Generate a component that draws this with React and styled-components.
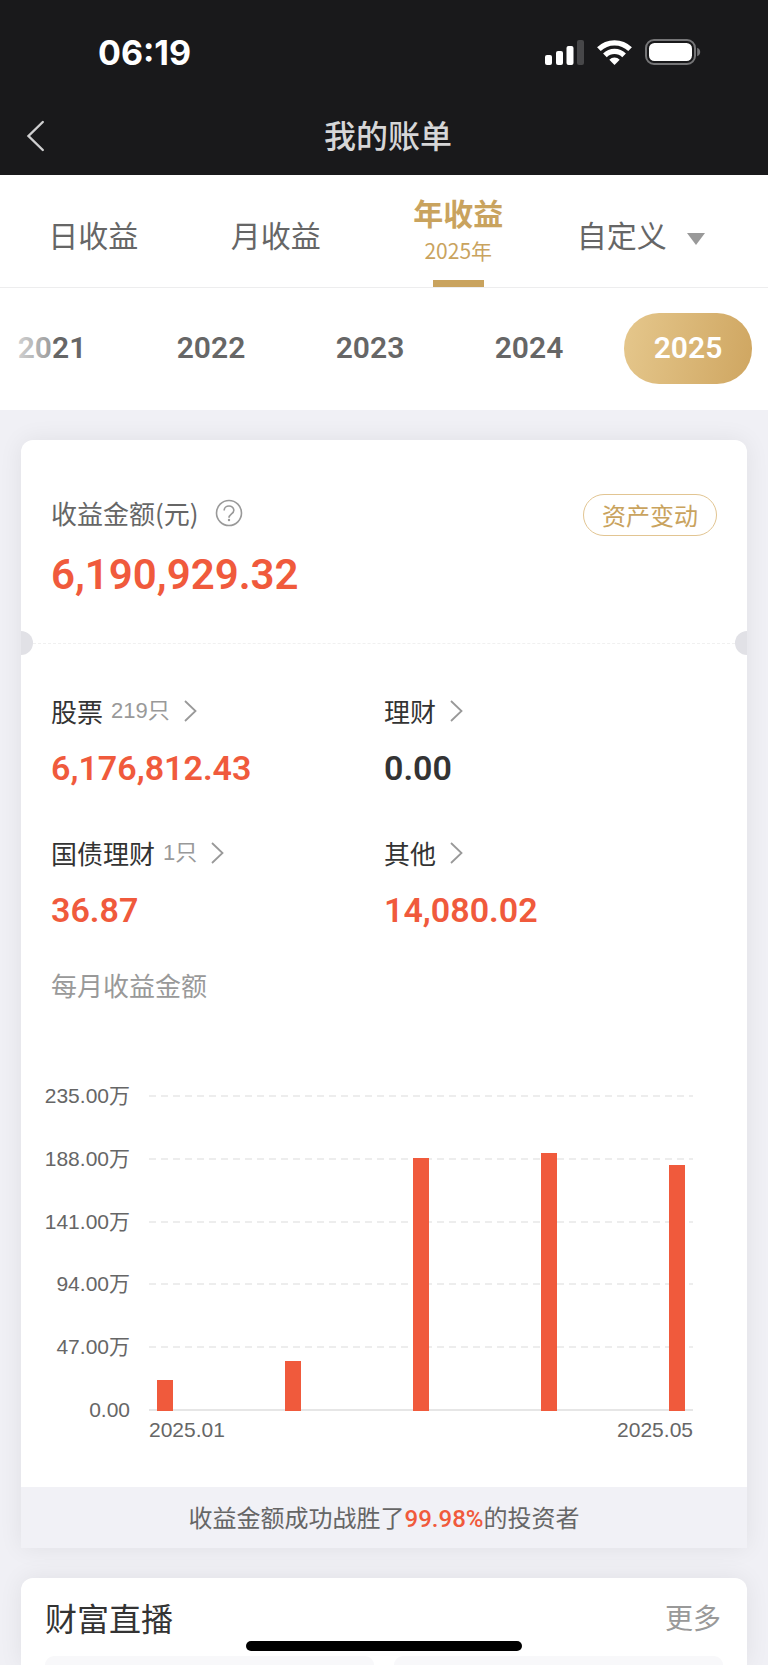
import React from "react";
import styled, { createGlobalStyle } from "styled-components";

const color = {
  ink: "#333",
  text: "#666",
  mute: "#999",
  gold: "#c9a35e",
  red: "#f05a3c",
  page: "#f0f0f5",
  bar: "#19191b",
};

const numerals = `Roboto, "Noto Sans CJK SC", sans-serif`;

const GlobalStyle = createGlobalStyle`
  *, *::before, *::after { box-sizing: border-box; }
  body {
    margin: 0;
    background: ${color.page};
    color: ${color.text};
    font-family: "Noto Sans CJK SC", sans-serif;
  }
  button {
    margin: 0;
    padding: 0;
    border: 0;
    background: none;
    color: inherit;
    font: inherit;
    cursor: pointer;
  }
  a { color: inherit; text-decoration: none; }
  h1, h2, p { margin: 0; font-weight: 400; }
  svg { display: block; flex: none; }
`;

const Header = styled.header`
  background: ${color.bar};
`;

const StatusBar = styled.div`
  display: flex;
  align-items: center;
  justify-content: space-between;
  height: 96px;
  padding: 8px 67px 0 98px;
`;

const Clock = styled.time`
  padding-top: 2px;
  font: 700 34px/40px Inter, sans-serif;
  color: #fff;
`;

const StatusIcons = styled.div`
  display: flex;
  align-items: center;
  gap: 13px;
`;

const NavBar = styled.div`
  display: grid;
  grid-template-columns: 1fr auto 1fr;
  align-items: center;
  height: 79px;
  padding: 0 16px 0 24px;
  color: #d6d6d7;
`;

const Title = styled.h1`
  padding-bottom: 4px;
  font-size: 32px;
  line-height: 44px;
  font-weight: 500;
`;

const Tabs = styled.nav`
  display: grid;
  grid-template-columns: repeat(4, 1fr);
  height: 113px;
  padding: 0 36px 0 2px;
  background: #fff;
  border-bottom: 1px solid #ededee;
`;

const Tab = styled.button`
  display: flex;
  align-items: center;
  justify-content: center;
  gap: 20px;
  padding-top: 5px;
  font-size: 30px;
  line-height: 40px;
`;

const ActiveTab = styled.button`
  display: flex;
  flex-direction: column;
  align-items: center;
  justify-content: space-between;
  padding-top: 17px;
  color: ${color.gold};
  font-size: 30px;
  font-weight: 700;
  line-height: 40px;

  small {
    display: block;
    font-size: 21px;
    font-weight: 400;
    line-height: 36px;
  }

  &::after {
    content: "";
    width: 51px;
    height: 7px;
    background: ${color.gold};
  }
`;

const Caret = styled.span`
  border: 9px solid transparent;
  border-top: 12px solid ${color.mute};
  border-bottom: 0;
  margin-top: 10px;
`;

const Years = styled.div`
  position: relative;
  display: flex;
  align-items: center;
  justify-content: flex-end;
  gap: 31px;
  height: 122px;
  padding: 0 16px 2px 0;
  overflow: hidden;
  background: #fff;

  &::before {
    content: "";
    position: absolute;
    inset: 0 auto 0 0;
    width: 53px;
    background: linear-gradient(90deg, rgba(255, 255, 255, 0.88), rgba(255, 255, 255, 0.34));
    pointer-events: none;
  }
`;

const Year = styled.button`
  flex: none;
  width: 128px;
  height: 71px;
  border-radius: 35px;
  font-family: ${numerals};
  font-size: 30px;
  font-weight: 600;
  line-height: 40px;
  color: ${(p) => (p.$active ? "#fff" : color.text)};
  background: ${(p) => (p.$active ? "linear-gradient(100deg, #e5c78c, #cfa661)" : "none")};
`;

const Main = styled.main`
  display: flex;
  flex-direction: column;
  gap: 30px;
  padding: 30px 21px 0;
`;

const Card = styled.section`
  background: #fff;
  border-radius: 12px 12px 0 0;
  box-shadow: 0 0 24px rgba(0, 0, 0, 0.07);
`;

const Summary = styled.div`
  padding: 54px 30px 38px;
`;

const SummaryHead = styled.div`
  display: flex;
  align-items: center;
  justify-content: space-between;
  height: 42px;
`;

const Label = styled.div`
  display: flex;
  align-items: center;
  gap: 16px;
  padding-bottom: 4px;
  font-size: 26px;
  line-height: 38px;
`;

const Outline = styled.button`
  width: 134px;
  height: 42px;
  border: 1px solid #e2c592;
  border-radius: 21px;
  color: ${color.gold};
  font-size: 24px;
  line-height: 36px;
`;

const Total = styled.p`
  margin-top: 9px;
  color: ${color.red};
  font-family: ${numerals};
  font-size: 42px;
  font-weight: 600;
  line-height: 60px;
`;

const Perforation = styled.div`
  display: flex;
  align-items: center;
  justify-content: space-between;
  height: 24px;
  margin: -12px 0;

  &::before,
  &::after {
    content: "";
    width: 12px;
    height: 24px;
    background: #e1e1e6;
  }
  &::before { border-radius: 0 12px 12px 0; }
  &::after { border-radius: 12px 0 0 12px; }
`;

const Dashes = styled.span`
  flex: 1;
  border-top: 1px dashed #f0f0f0;
`;

const Holdings = styled.div`
  display: grid;
  grid-template-columns: 1fr 1fr;
  row-gap: 44px;
  padding: 49px 30px 0;
`;

const HoldingName = styled.a`
  display: flex;
  align-items: center;
  color: ${color.ink};
  font-size: 26px;
  line-height: 38px;

  small {
    margin-left: 8px;
    color: ${color.mute};
    font-family: "Liberation Sans", "Noto Sans CJK SC", sans-serif;
    font-size: 22px;
  }
  svg { margin-left: 14px; }
`;

const HoldingValue = styled.p`
  margin-top: 16px;
  color: ${(p) => (p.$flat ? color.ink : color.red)};
  font-family: ${numerals};
  font-size: 34px;
  font-weight: 600;
  line-height: 44px;
`;

const ChartTitle = styled.h2`
  padding: 34px 30px 0;
  color: ${color.mute};
  font-size: 26px;
  line-height: 38px;
`;

const Chart = styled.div`
  display: grid;
  grid-template-columns: 89px 1fr;
  column-gap: 19px;
  padding: 80px 54px 45px 20px;
  font-family: "Liberation Sans", "Noto Sans CJK SC", sans-serif;
  font-size: 21px;
  line-height: 24px;
`;

const Scale = styled.div`
  display: flex;
  flex-direction: column;
  justify-content: space-between;
  height: 338px;
  text-align: right;

  span { height: 24px; }
`;

const Plot = styled.div`
  display: grid;
  height: 316px;
  margin-top: 11px;

  > * { grid-area: 1 / 1; }
`;

const GridLines = styled.div`
  display: flex;
  flex-direction: column;
  justify-content: space-between;
`;

const GridLine = styled.span`
  height: 2px;
  background: ${(p) =>
    p.$base ? "#e6e6e6" : "repeating-linear-gradient(90deg, #ededed 0 7px, transparent 7px 12px)"};
`;

const Bars = styled.div`
  display: flex;
  align-items: flex-end;
  justify-content: space-between;
  padding: 0 8px;
`;

const Bar = styled.span`
  width: 16px;
  background: ${color.red};
`;

const Months = styled.div`
  display: flex;
  justify-content: space-between;
  margin-top: 7px;
`;

const Rank = styled.p`
  padding: 12px 0 13px;
  background: #f1f1f6;
  text-align: center;
  font-size: 24px;
  line-height: 36px;

  em {
    color: ${color.red};
    font-family: ${numerals};
    font-style: normal;
    font-weight: 500;
    line-height: 24px;
  }
`;

const LiveHead = styled.div`
  display: flex;
  align-items: center;
  justify-content: space-between;
  height: 78px;
  padding: 0 26px 0 24px;
`;

const LiveTitle = styled.h2`
  color: ${color.ink};
  font-size: 32px;
  line-height: 44px;
`;

const More = styled.a`
  color: ${color.mute};
  font-size: 28px;
  line-height: 40px;
`;

const Tiles = styled.div`
  display: grid;
  grid-template-columns: 1fr 1fr;
  gap: 20px;
  padding: 0 24px;
`;

const Tile = styled.div`
  height: 9px;
  border-radius: 12px 12px 0 0;
  background: #f8f8fa;
`;

const HomeIndicator = styled.div`
  position: fixed;
  bottom: 14px;
  left: 50%;
  width: 276px;
  height: 10px;
  margin-left: -138px;
  border-radius: 5px;
  background: #000;
`;

const Signal = () => (
  <svg width="39" height="25" viewBox="0 0 39 25" fill="#fff" aria-hidden="true">
    <rect x="0" y="15" width="7" height="10" rx="2" />
    <rect x="11" y="11" width="7" height="14" rx="2" />
    <rect x="21.500" y="6" width="7" height="19" rx="2" />
    <rect x="32" y="0" width="7" height="25" rx="2" fill="#474749" />
  </svg>
);

const Wifi = () => (
  <svg width="35" height="25" viewBox="0 0 35 25" aria-hidden="true">
    <g fill="none" stroke="#fff" strokeWidth="5.200">
      <path d="M1.900 9.200a22.300 22.300 0 0 1 31.200 0" />
      <path d="M7.900 15.400a13.700 13.700 0 0 1 19.200 0" />
    </g>
    <path d="M17.500 25l-5.200-5.300a7.400 7.400 0 0 1 10.400 0z" fill="#fff" />
  </svg>
);

const Battery = () => (
  <svg width="56" height="26" viewBox="0 0 56 26" aria-hidden="true">
    <rect x="1" y="1" width="49" height="24" rx="8" fill="none" stroke="#757577" strokeWidth="2" />
    <rect x="4" y="4" width="43" height="18" rx="5.500" fill="#fff" />
    <path d="M52.200 8.800c4 1.400 4 7 0 8.400z" fill="#757577" />
  </svg>
);

const BackIcon = () => (
  <svg width="22" height="32" viewBox="0 0 22 32" fill="none" stroke="#cfcfd0" strokeWidth="2.400" strokeLinecap="round" aria-hidden="true">
    <path d="M18.800 2L4.500 16l14.300 14" />
  </svg>
);

const HelpIcon = () => (
  <svg width="28" height="28" viewBox="0 0 28 28" fill="none" stroke="#999" strokeWidth="1.600" aria-hidden="true">
    <circle cx="14" cy="14" r="12.500" />
    <path d="M9.200 11.400c0-5.800 9.600-5.800 9.600 0 0 3.400-4.800 3.500-4.800 7.400" />
    <circle cx="14" cy="21" r="1.200" fill="#999" stroke="none" />
  </svg>
);

const Chevron = () => (
  <svg width="13" height="22" viewBox="0 0 13 22" fill="none" stroke="#999" strokeWidth="1.800" aria-hidden="true">
    <path d="M1 1l10.500 10L1 21" />
  </svg>
);

const years = ["2021", "2022", "2023", "2024", "2025"];

const holdings = [
  { name: "股票", count: "219只", value: "6,176,812.43" },
  { name: "理财", value: "0.00", flat: true },
  { name: "国债理财", count: "1只", value: "36.87" },
  { name: "其他", value: "14,080.02" },
];

const ticks = ["235.00万", "188.00万", "141.00万", "94.00万", "47.00万", "0.00"];
const maxValue = 235;
const months = [
  { month: "2025.01", value: 23 },
  { month: "2025.02", value: 37 },
  { month: "2025.03", value: 188 },
  { month: "2025.04", value: 192 },
  { month: "2025.05", value: 183 },
];

export default function App() {
  return (
    <>
      <GlobalStyle />
      <Header>
        <StatusBar>
          <Clock>06:19</Clock>
          <StatusIcons>
            <Signal />
            <Wifi />
            <Battery />
          </StatusIcons>
        </StatusBar>
        <NavBar>
          <button type="button" aria-label="返回">
            <BackIcon />
          </button>
          <Title>我的账单</Title>
        </NavBar>
      </Header>

      <Tabs>
        <Tab type="button">日收益</Tab>
        <Tab type="button">月收益</Tab>
        <ActiveTab type="button">
          <span>
            年收益
            <small>2025年</small>
          </span>
        </ActiveTab>
        <Tab type="button">
          自定义
          <Caret />
        </Tab>
      </Tabs>

      <Years>
        {years.map((year) => (
          <Year key={year} type="button" $active={year === "2025"}>
            {year}
          </Year>
        ))}
      </Years>

      <Main>
        <Card>
          <Summary>
            <SummaryHead>
              <Label>
                收益金额(元)
                <button type="button" aria-label="说明">
                  <HelpIcon />
                </button>
              </Label>
              <Outline type="button">资产变动</Outline>
            </SummaryHead>
            <Total>6,190,929.32</Total>
          </Summary>

          <Perforation>
            <Dashes />
          </Perforation>

          <Holdings>
            {holdings.map((item) => (
              <div key={item.name}>
                <HoldingName href="#">
                  {item.name}
                  {item.count && <small>{item.count}</small>}
                  <Chevron />
                </HoldingName>
                <HoldingValue $flat={item.flat}>{item.value}</HoldingValue>
              </div>
            ))}
          </Holdings>

          <ChartTitle>每月收益金额</ChartTitle>
          <Chart>
            <Scale>
              {ticks.map((tick) => (
                <span key={tick}>{tick}</span>
              ))}
            </Scale>
            <div>
              <Plot>
                <GridLines>
                  {ticks.map((tick) => (
                    <GridLine key={tick} $base={tick === "0.00"} />
                  ))}
                </GridLines>
                <Bars>
                  {months.map((m) => (
                    <Bar key={m.month} style={{ height: `${(m.value / maxValue) * 100}%` }} />
                  ))}
                </Bars>
              </Plot>
              <Months>
                <span>{months[0].month}</span>
                <span>{months[months.length - 1].month}</span>
              </Months>
            </div>
          </Chart>

          <Rank>
            收益金额成功战胜了<em>99.98%</em>的投资者
          </Rank>
        </Card>

        <Card>
          <LiveHead>
            <LiveTitle>财富直播</LiveTitle>
            <More href="#">更多</More>
          </LiveHead>
          <Tiles>
            <Tile />
            <Tile />
          </Tiles>
        </Card>
      </Main>
      <HomeIndicator />
    </>
  );
}
